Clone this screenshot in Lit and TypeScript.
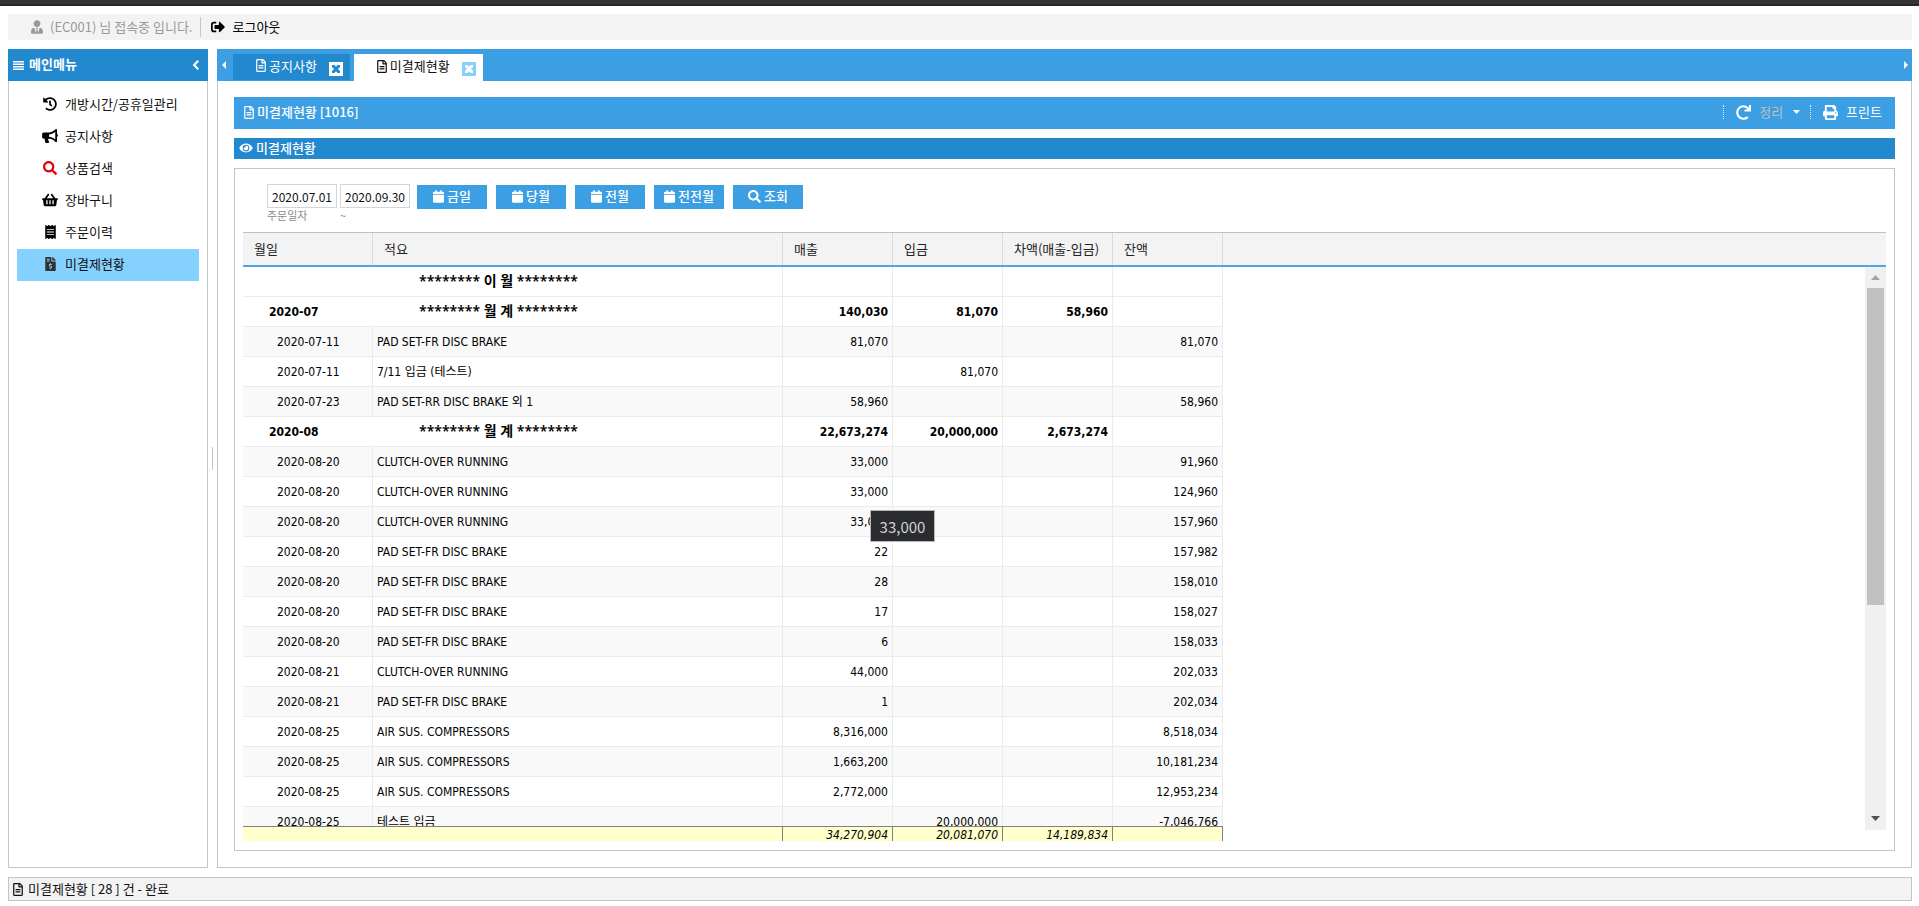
import { LitElement, html, css, svg, nothing } from 'lit';
import { customElement, property, state } from 'lit/decorators.js';
import { classMap } from 'lit/directives/class-map.js';

type Glyph = { w: number; h?: number; d: string };

const GLYPHS: Record<string, Glyph> = {
  file: { w: 384, d: 'M288 248v28c0 6.6-5.4 12-12 12H108c-6.6 0-12-5.4-12-12v-28c0-6.6 5.4-12 12-12h168c6.6 0 12 5.4 12 12zm-12 72H108c-6.6 0-12 5.4-12 12v28c0 6.6 5.4 12 12 12h168c6.6 0 12-5.4 12-12v-28c0-6.6-5.4-12-12-12zm108-188.1V464c0 26.5-21.5 48-48 48H48c-26.5 0-48-21.5-48-48V48C0 21.5 21.5 0 48 0h204.1C264.8 0 277 5.1 286 14.1L369.9 98c9 8.9 14.1 21.2 14.1 33.9zm-128-80V128h76.1L256 51.9zM336 464V176H232c-13.3 0-24-10.7-24-24V48H48v416h288z' },
  history: { w: 512, d: 'M504 255.531c.253 136.64-111.18 248.372-247.82 248.468-59.015.042-113.223-20.53-155.822-54.911-11.077-8.94-11.905-25.541-1.839-35.607l11.267-11.267c8.609-8.609 22.353-9.551 31.891-1.984C173.062 425.135 212.781 440 256 440c101.705 0 184-82.311 184-184 0-101.705-82.311-184-184-184-48.814 0-93.149 18.969-126.068 49.932l50.754 50.754c10.08 10.08 2.941 27.314-11.313 27.314H24c-8.837 0-16-7.163-16-16V38.627c0-14.254 17.234-21.393 27.314-11.314l49.372 49.372C129.209 34.136 189.552 8 256 8c136.81 0 247.747 110.78 248 247.531zm-180.912 78.784l9.823-12.63c8.138-10.463 6.253-25.542-4.21-33.679L288 256.349V152c0-13.255-10.745-24-24-24h-16c-13.255 0-24 10.745-24 24v135.651l65.409 50.874c10.463 8.137 25.541 6.253 33.679-4.21z' },
  bullhorn: { w: 576, d: 'M576 240c0-23.63-12.95-44.04-32-55.12V32.01C544 23.26 537.02 0 512 0c-7.12 0-14.19 2.38-19.98 7.02l-85.03 68.03C364.28 109.19 310.66 128 256 128H64c-35.35 0-64 28.65-64 64v96c0 35.35 28.65 64 64 64h33.7c-1.39 10.48-2.18 21.14-2.18 32 0 39.77 9.26 77.35 25.56 110.94 5.19 10.69 16.52 17.06 28.4 17.06h74.28c26.05 0 41.69-29.84 25.9-50.56-16.4-21.52-26.15-48.36-26.15-77.44 0-11.11 1.62-21.79 4.41-32H256c54.66 0 108.28 18.81 150.98 52.95l85.03 68.03a32.023 32.023 0 0 0 19.98 7.02c24.92 0 32-22.78 32-32V295.13C563.05 284.04 576 263.63 576 240zm-96 141.42l-33.05-26.44C392.95 311.78 325.12 288 256 288v-96c69.12 0 136.95-23.78 190.95-66.98L480 98.58v282.84z' },
  search: { w: 512, d: 'M505 442.7L405.3 343c-4.5-4.5-10.6-7-17-7H372c27.6-35.3 44-79.7 44-128C416 93.1 322.9 0 208 0S0 93.1 0 208s93.1 208 208 208c48.3 0 92.7-16.4 128-44v16.3c0 6.4 2.5 12.5 7 17l99.7 99.7c9.4 9.4 24.6 9.4 33.9 0l28.3-28.3c9.4-9.4 9.4-24.6.1-34zM208 336c-70.7 0-128-57.2-128-128 0-70.7 57.2-128 128-128 70.7 0 128 57.2 128 128 0 70.7-57.2 128-128 128z' },
  basket: { w: 576, d: 'M576 216v16c0 13.255-10.745 24-24 24h-8l-26.113 182.788C514.509 462.435 494.257 480 470.37 480H105.63c-23.887 0-44.139-17.565-47.518-41.212L32 256h-8c-13.255 0-24-10.745-24-24v-16c0-13.255 10.745-24 24-24h67.341l106.78-146.821c10.395-14.292 30.407-17.453 44.701-7.058 14.293 10.395 17.453 30.408 7.058 44.701L170.477 192h235.046L326.12 82.821c-10.395-14.292-7.234-34.306 7.059-44.701 14.291-10.395 34.306-7.235 44.701 7.058L484.659 192H552c13.255 0 24 10.745 24 24zM312 392V280c0-13.255-10.745-24-24-24s-24 10.745-24 24v112c0 13.255 10.745 24 24 24s24-10.745 24-24zm112 0V280c0-13.255-10.745-24-24-24s-24 10.745-24 24v112c0 13.255 10.745 24 24 24s24-10.745 24-24zm-224 0V280c0-13.255-10.745-24-24-24s-24 10.745-24 24v112c0 13.255 10.745 24 24 24s24-10.745 24-24z' },
  receipt: { w: 384, d: 'M358.4 3.2L320 48 265.6 3.2a15.9 15.9 0 0 0-19.2 0L192 48 137.6 3.2a15.9 15.9 0 0 0-19.2 0L64 48 25.6 3.2C15-4.7 0 2.8 0 16v480c0 13.2 15 20.7 25.6 12.8L64 464l54.4 44.8a15.9 15.9 0 0 0 19.2 0L192 464l54.4 44.8a15.9 15.9 0 0 0 19.2 0L320 464l38.4 44.8c10.5 7.9 25.6.4 25.6-12.8V16c0-13.2-15-20.7-25.6-12.8zM320 360c0 4.4-3.6 8-8 8H72c-4.4 0-8-3.6-8-8v-16c0-4.4 3.6-8 8-8h240c4.4 0 8 3.6 8 8v16zm0-96c0 4.4-3.6 8-8 8H72c-4.4 0-8-3.6-8-8v-16c0-4.4 3.6-8 8-8h240c4.4 0 8 3.6 8 8v16zm0-96c0 4.4-3.6 8-8 8H72c-4.4 0-8-3.6-8-8v-16c0-4.4 3.6-8 8-8h240c4.4 0 8 3.6 8 8v16z' },
  invoice: { w: 384, d: 'M377 105L279.1 7c-4.5-4.5-10.6-7-17-7H256v128h128v-6.1c0-6.3-2.5-12.4-7-16.9zm-153 31V0H24C10.7 0 0 10.7 0 24v464c0 13.3 10.7 24 24 24h336c13.3 0 24-10.7 24-24V160H248c-13.2 0-24-10.8-24-24zM64 72c0-4.42 3.58-8 8-8h80c4.42 0 8 3.58 8 8v16c0 4.42-3.58 8-8 8H72c-4.42 0-8-3.58-8-8V72zm0 80v-16c0-4.42 3.58-8 8-8h80c4.42 0 8 3.58 8 8v16c0 4.42-3.58 8-8 8H72c-4.42 0-8-3.58-8-8zm144 263.88V440c0 4.42-3.58 8-8 8h-16c-4.42 0-8-3.58-8-8v-24.29c-11.29-.58-22.27-4.52-31.37-11.35-3.9-2.93-4.1-8.77-.57-12.14l11.75-11.21c2.77-2.64 6.89-2.76 10.13-.73 3.87 2.42 8.26 3.72 12.82 3.72h28.11c6.5 0 11.8-5.92 11.8-13.19 0-5.95-3.61-11.19-8.77-12.73l-45-13.5c-18.59-5.58-31.58-23.42-31.58-43.39 0-24.52 19.05-44.44 42.67-45.07V232c0-4.42 3.58-8 8-8h16c4.42 0 8 3.58 8 8v24.29c11.29.58 22.27 4.51 31.37 11.35 3.9 2.93 4.1 8.77.57 12.14l-11.75 11.21c-2.77 2.64-6.89 2.76-10.13.73-3.87-2.43-8.26-3.72-12.82-3.72h-28.11c-6.5 0-11.8 5.92-11.8 13.19 0 5.95 3.61 11.19 8.77 12.73l45 13.5c18.59 5.58 31.58 23.42 31.58 43.39 0 24.53-19.05 44.44-42.67 45.07z' },
  user: { w: 448, d: 'M224 256c70.7 0 128-57.3 128-128S294.7 0 224 0 96 57.3 96 128s57.3 128 128 128zm95.8 32.6L272 480l-32-136 32-56h-96l32 56-32 136-47.8-191.4C56.9 292 0 350.3 0 422.4V464c0 26.5 21.5 48 48 48h352c26.5 0 48-21.5 48-48v-41.6c0-72.1-56.9-130.4-128.2-133.8z' },
  logout: { w: 512, d: 'M497 273L329 441c-15 15-41 4.5-41-17v-96H152c-13.3 0-24-10.7-24-24v-96c0-13.3 10.7-24 24-24h136V88c0-21.4 25.9-32 41-17l168 168c9.3 9.4 9.3 24.6 0 34zM192 436v-40c0-6.6-5.4-12-12-12H96c-17.7 0-32-14.3-32-32V160c0-17.7 14.3-32 32-32h84c6.6 0 12-5.4 12-12V76c0-6.6-5.4-12-12-12H96c-53 0-96 43-96 96v192c0 53 43 96 96 96h84c6.6 0 12-5.4 12-12z' },
  eye: { w: 576, d: 'M572.52 241.4C518.29 135.59 410.93 64 288 64S57.68 135.64 3.48 241.41a32.35 32.35 0 0 0 0 29.19C57.71 376.41 165.07 448 288 448s230.32-71.64 284.52-177.41a32.35 32.35 0 0 0 0-29.19zM288 400a144 144 0 1 1 144-144 143.93 143.93 0 0 1-144 144zm0-240a95.31 95.31 0 0 0-25.31 3.79 47.85 47.85 0 0 1-66.9 66.9A95.78 95.78 0 1 0 288 160z' },
  calendar: { w: 448, d: 'M12 192h424c6.6 0 12 5.4 12 12v260c0 26.5-21.5 48-48 48H48c-26.5 0-48-21.5-48-48V204c0-6.6 5.4-12 12-12zm436-44v-36c0-26.5-21.5-48-48-48h-48V12c0-6.6-5.4-12-12-12h-40c-6.6 0-12 5.4-12 12v52H160V12c0-6.6-5.4-12-12-12h-40c-6.6 0-12 5.4-12 12v52H48C21.5 64 0 85.5 0 112v36c0 6.6 5.4 12 12 12h424c6.6 0 12-5.4 12-12z' },
  redo: { w: 512, d: 'M500.33 0h-47.41a12 12 0 0 0-12 12.57l4 82.76A247.42 247.42 0 0 0 256 8C119.34 8 7.9 119.53 8 256.19 8.1 393.07 119.1 504 256 504a247.1 247.1 0 0 0 166.18-63.91 12 12 0 0 0 .48-17.43l-34-34a12 12 0 0 0-16.38-.55A176 176 0 1 1 402.1 157.8l-101.53-4.87a12 12 0 0 0-12.57 12v47.41a12 12 0 0 0 12 12h200.33a12 12 0 0 0 12-12V12a12 12 0 0 0-12-12z' },
  print: { w: 512, d: 'M448 192V77.25c0-8.49-3.37-16.62-9.37-22.63L393.37 9.37c-6-6-14.14-9.37-22.63-9.37H96C78.33 0 64 14.33 64 32v160c-35.35 0-64 28.65-64 64v112c0 8.84 7.16 16 16 16h48v96c0 17.67 14.33 32 32 32h320c17.67 0 32-14.33 32-32v-96h48c8.84 0 16-7.16 16-16V256c0-35.35-28.65-64-64-64zm-64 256H128v-96h256v96zm0-224H128V64h192v48c0 8.84 7.16 16 16 16h48v96zm48 72c-13.25 0-24-10.75-24-24 0-13.26 10.75-24 24-24s24 10.74 24 24c0 13.25-10.75 24-24 24z' },
  bars: { w: 11, h: 9, d: 'M0 0h11v1.500H0zM0 2.500h11v1.500H0zM0 5h11v1.500H0zM0 7.500h11v1.500H0z' },
  chevron: { w: 6, h: 10, d: 'M4.5 0L6 1.500 2.500 5 6 8.500 4.500 10 0 5.500v-1z' },
  left: { w: 4, h: 8, d: 'M4 0v8L0 4z' },
  right: { w: 4, h: 8, d: 'M0 0v8l4-4z' },
  up: { w: 9, h: 5, d: 'M0 5h9L4.500 0z' },
  down: { w: 9, h: 5, d: 'M0 0h9L4.500 5z' },
  cross: { w: 8, h: 8, d: 'M0 0h2.500L4 1.800 5.500 0H8v2L6 4l2 2v2H5.500L4 6.200 2.500 8H0V6l2-2-2-2z' },
};

/** Inline glyph; `size` is the drawn height in pixels. */
const icon = (name: string, size: number) => {
  const g = GLYPHS[name];
  const h = g.h ?? 512;
  return html`<svg class="icon" aria-hidden="true" viewBox="0 0 ${g.w} ${h}" width=${Math.round((g.w / h) * size)} height=${size}>${svg`<path d=${g.d}></path>`}</svg>`;
};

const base = css`
  *, *::before, *::after { box-sizing: border-box; }
  .icon { display: block; flex: none; fill: currentColor; }
  button {
    margin: 0; padding: 0; border: 0; background: none; color: inherit;
    font: inherit; cursor: pointer; display: flex; align-items: center;
  }
  a { color: inherit; text-decoration: none; }
`;

type Row = { group?: boolean; cells: string[] };

const ROWS: Row[] = [
  { group: true, cells: ['', '******** 이 월 ********', '', '', '', ''] },
  { group: true, cells: ['2020-07', '******** 월 계 ********', '140,030', '81,070', '58,960', ''] },
  { cells: ['2020-07-11', 'PAD SET-FR DISC BRAKE', '81,070', '', '', '81,070'] },
  { cells: ['2020-07-11', '7/11 입금 (테스트)', '', '81,070', '', ''] },
  { cells: ['2020-07-23', 'PAD SET-RR DISC BRAKE 외 1', '58,960', '', '', '58,960'] },
  { group: true, cells: ['2020-08', '******** 월 계 ********', '22,673,274', '20,000,000', '2,673,274', ''] },
  { cells: ['2020-08-20', 'CLUTCH-OVER RUNNING', '33,000', '', '', '91,960'] },
  { cells: ['2020-08-20', 'CLUTCH-OVER RUNNING', '33,000', '', '', '124,960'] },
  { cells: ['2020-08-20', 'CLUTCH-OVER RUNNING', '33,000', '', '', '157,960'] },
  { cells: ['2020-08-20', 'PAD SET-FR DISC BRAKE', '22', '', '', '157,982'] },
  { cells: ['2020-08-20', 'PAD SET-FR DISC BRAKE', '28', '', '', '158,010'] },
  { cells: ['2020-08-20', 'PAD SET-FR DISC BRAKE', '17', '', '', '158,027'] },
  { cells: ['2020-08-20', 'PAD SET-FR DISC BRAKE', '6', '', '', '158,033'] },
  { cells: ['2020-08-21', 'CLUTCH-OVER RUNNING', '44,000', '', '', '202,033'] },
  { cells: ['2020-08-21', 'PAD SET-FR DISC BRAKE', '1', '', '', '202,034'] },
  { cells: ['2020-08-25', 'AIR SUS. COMPRESSORS', '8,316,000', '', '', '8,518,034'] },
  { cells: ['2020-08-25', 'AIR SUS. COMPRESSORS', '1,663,200', '', '', '10,181,234'] },
  { cells: ['2020-08-25', 'AIR SUS. COMPRESSORS', '2,772,000', '', '', '12,953,234'] },
  { cells: ['2020-08-25', '테스트 입금', '', '20,000,000', '', '-7,046,766'] },
];

@customElement('ledger-grid')
export class LedgerGrid extends LitElement {
  @property({ attribute: false }) rows: Row[] = [];
  @property({ attribute: false }) totals: string[] = [];

  static styles = [base, css`
    :host {
      flex: 1; min-height: 0; display: grid;
      grid-template: 35px minmax(0, 1fr) 11px / minmax(0, 1fr) 21px;
      color: #000;
    }
    .table {
      grid-area: 1 / 1 / -1 / -1; min-height: 0;
      display: flex; flex-direction: column;
      font: 12px/18px "DejaVu Sans Condensed", "Noto Sans CJK KR", sans-serif;
    }
    thead, tbody, tfoot { display: block; }
    tr { display: grid; grid-template-columns: 130px 410px repeat(4, 110px); }
    th, td { padding: 0; text-align: left; font-weight: inherit; white-space: nowrap; overflow: hidden; }
    thead { flex: none; background: #f3f3f3; border-top: 1px solid #c0c0c0; border-bottom: 2px solid #4ea6e4; }
    thead tr { height: 32px; }
    thead th {
      padding: 6px 0 6px 11px; border-right: 1px solid #dadada; color: #222;
      font: 13px/20px "Noto Sans CJK KR", sans-serif;
    }
    tbody { flex: 1; min-height: 0; overflow: hidden; }
    tbody tr { height: 30px; width: max-content; }
    tbody tr:nth-child(odd):not(.group) { background: #f9f9f9; }
    tbody td { padding: 6px 4px 5px; border-right: 1px solid #ebebeb; border-bottom: 1px solid #ebebeb; }
    tbody td:first-child { padding-left: 34px; }
    .num { text-align: right; }
    .group { font-weight: 700; }
    tbody .group td:first-child { padding-left: 26px; border-right-color: transparent; }
    tbody .group td:nth-child(2) { padding: 5px 4px 6px 46px; font-family: "Noto Sans", "Noto Sans CJK KR", sans-serif; font-size: 14px; font-weight: 600; }
    tfoot { flex: none; font-style: italic; }
    tfoot tr { height: 15px; width: max-content; background: #ffffcc; border-top: 1px solid #808080; }
    tfoot td { padding: 0 4px; line-height: 16px; border-right: 1px solid #808080; }
    tfoot td:first-child { border-right-color: transparent; }
    .scroll {
      grid-area: 2 / 2; background: #f0f0f0; display: flex; flex-direction: column;
      align-items: center; padding: 8px 2px 9px; z-index: 1;
    }
    .thumb { flex: 0 0 58%; width: 17px; margin-top: 8px; background: #c1c1c1; }
    .arrow-up { color: #a3a3a3; }
    .arrow-down { color: #505050; margin-top: auto; }
  `];

  render() {
    const heads = ['월일', '적요', '매출', '입금', '차액(매출-입금)', '잔액'];
    return html`
      <table class="table">
        <thead><tr>${heads.map(h => html`<th scope="col">${h}</th>`)}</tr></thead>
        <tbody>
          ${this.rows.map(r => html`<tr class=${classMap({ group: !!r.group })}>
            ${r.cells.map((c, i) => html`<td class=${i > 1 ? 'num' : nothing}>${c}</td>`)}
          </tr>`)}
        </tbody>
        <tfoot><tr>${this.totals.map(t => html`<td class="num">${t}</td>`)}</tr></tfoot>
      </table>
      <div class="scroll" aria-hidden="true">
        <span class="arrow-up">${icon('up', 5)}</span>
        <div class="thumb"></div>
        <span class="arrow-down">${icon('down', 5)}</span>
      </div>`;
  }
}

@customElement('side-menu')
export class SideMenu extends LitElement {
  @state() private current = '미결제현황';

  static styles = [base, css`
    :host { flex: none; width: 200px; display: flex; flex-direction: column; }
    .head {
      height: 32px; padding: 0 9px 0 5px; display: flex; align-items: center; gap: 5px;
      background: #2389cf; color: #fff;
    }
    .title { flex: 1; margin: 0; padding-bottom: 2px; font-size: 13px; line-height: 30px; }
    .list {
      flex: 1; margin: 0; padding: 8px; list-style: none;
      border: 1px solid #c5c5c5; border-top: 0;
    }
    .item { display: flex; align-items: center; gap: 7px; height: 32px; padding: 0 0 2px 25px; color: #111; }
    .slot { width: 16px; display: flex; justify-content: center; color: #000; }
    .red { color: #e60012; }
    .current { background: #84d0ff; }
    .current .slot { color: #333; }
  `];

  private items = [
    ['history', '개방시간/공휴일관리'], ['bullhorn', '공지사항'], ['search', '상품검색'],
    ['basket', '장바구니'], ['receipt', '주문이력'], ['invoice', '미결제현황'],
  ];

  render() {
    return html`
      <div class="head">${icon('bars', 9)}<h2 class="title">메인메뉴</h2>
        <button aria-label="메뉴 접기">${icon('chevron', 10)}</button></div>
      <ul class="list">
        ${this.items.map(([g, t]) => html`<li>
          <a href="#" class=${classMap({ item: true, current: t === this.current })}
            @click=${(e: Event) => { e.preventDefault(); this.current = t; }}>
            <span class=${classMap({ slot: true, red: g === 'search' })}>${icon(g, 14)}</span>${t}</a></li>`)}
      </ul>`;
  }
}

@customElement('app-root')
export class AppRoot extends LitElement {
  static styles = [base, css`
    :host {
      display: flex; flex-direction: column; height: 100vh; overflow: hidden; position: relative;
      background: #fff; color: #111;
      font: 13px/20px "Noto Sans CJK KR", sans-serif;
    }
    .edge { flex: none; height: 6px; background: #333438; border-bottom: 2px solid #26262a; }
    .user {
      flex: none; height: 26px; margin: 8px 7px 9px 8px; padding-left: 23px;
      display: flex; align-items: center; background: #f3f3f3;
    }
    .who { display: flex; align-items: center; gap: 7px; padding-right: 8px; color: #999; }
    .logout { gap: 7px; padding-left: 10px; border-left: 1px solid #c5c5c5; height: 20px; color: #000; }
    .main { flex: 1; min-height: 0; margin: 0 7px 9px 8px; display: flex; }
    .splitter { flex: none; width: 9px; display: flex; align-items: center; justify-content: center; }
    .grip { width: 1px; height: 23px; background: #c5c5c5; }
    .work { flex: 1; min-width: 0; display: flex; flex-direction: column; }
    .tabs { flex: none; height: 32px; display: flex; align-items: flex-end; background: #3c9fe3; color: #fff; }
    .nudge { width: 16px; height: 32px; justify-content: center; padding-right: 3px; }
    .nudge.last { margin-left: auto; width: 12px; padding: 0; }
    .tab { display: flex; align-items: center; padding: 0 7px 0 23px; height: 27px; }
    .pick { gap: 3px; height: 27px; padding-bottom: 3px; margin-right: 12px; }
    .tab.idle { background: #2389cf; margin-right: 4px; border-bottom: 1px solid #3c9fe3; }
    .tab.open { background: #fff; color: #111; }
    .close { width: 14px; height: 14px; margin-top: 3px; justify-content: center; background: #fff; color: #2389cf; }
    .open .close { background: #84d0ff; color: #fff; }
    .page {
      flex: 1; min-height: 0; padding: 16px; display: flex; flex-direction: column;
      border: 1px solid #c5c5c5; border-top: 0;
    }
    .bar { flex: none; display: flex; align-items: center; color: #fff; font-weight: 500; }
    .bar.title { height: 32px; padding: 0 13px 2px 10px; gap: 3px; background: #3c9fe3; }
    .bar.section { height: 21px; margin: 9px 0; padding: 0 5px 1px; gap: 3px; background: #2389cf; }
    h1, h3 { margin: 0; font: inherit; }
    .tools { margin-left: auto; display: flex; align-items: center; font-weight: 400; }
    .tool { gap: 8px; padding-left: 12px; height: 14px; border-left: 1px dotted #e4f2fc; }
    .tool.muted { padding-right: 10px; }
    .muted .caption { color: #c0c0c0; margin-right: 2px; }
    .panel {
      flex: 1; min-height: 0; padding: 15px 8px 9px; display: flex; flex-direction: column;
      border: 1px solid #c5c5c5;
    }
    .filters { flex: none; display: flex; align-items: flex-start; padding-left: 24px; height: 48px; }
    .field { display: flex; flex-direction: column; width: 70px; margin-right: 3px; }
    .field input {
      order: -1; width: 70px; height: 24px; padding: 0 0 0 4px; border: 1px solid #d5d5d5; border-radius: 0;
      font: 12px "Noto Sans CJK KR", sans-serif; color: #111; background: #fff;
    }
    .field label { font-size: 11px; line-height: 14px; color: #8a8a8a; }
    .buttons { display: flex; gap: 9px; padding: 1px 0 0 4px; }
    .action { width: 70px; height: 24px; gap: 3px; justify-content: center; background: #3c9fe3; color: #fff; font-weight: 500; padding-bottom: 2px; }
    .status {
      flex: none; height: 24px; margin: 0 7px 5px 8px; padding: 0 4px; display: flex; align-items: center; gap: 5px;
      background: #f3f3f3; border: 1px solid #c5c5c5;
    }
    .tip {
      position: absolute; left: 870px; top: 510px; width: 65px; height: 32px; z-index: 2;
      border: 1px solid #b8b8ba; background: #2b2c30; color: #d2d2d2; text-align: center;
      font-size: 15px; line-height: 32px;
    }
  `];

  private presets = [['calendar', '금일'], ['calendar', '당월'], ['calendar', '전월'], ['calendar', '전전월'], ['search', '조회']];

  render() {
    return html`
      <div class="edge"></div>
      <header class="user">
        <span class="who">${icon('user', 14)}(EC001) 님 접속중 입니다.</span>
        <button class="logout">${icon('logout', 14)}로그아웃</button>
      </header>
      <div class="main">
        <side-menu></side-menu>
        <div class="splitter"><div class="grip"></div></div>
        <main class="work">
          <nav class="tabs">
            <button class="nudge" aria-label="이전 탭">${icon('left', 8)}</button>
            <div class="tab idle"><button class="pick">${icon('file', 13)}공지사항</button>
              <button class="close" aria-label="닫기">${icon('cross', 8)}</button></div>
            <div class="tab open"><button class="pick">${icon('file', 13)}미결제현황</button>
              <button class="close" aria-label="닫기">${icon('cross', 8)}</button></div>
            <button class="nudge last" aria-label="다음 탭">${icon('right', 8)}</button>
          </nav>
          <section class="page">
            <div class="bar title">${icon('file', 13)}<h1>미결제현황 [1016]</h1>
              <div class="tools">
                <button class="tool muted">${icon('redo', 15)}<span class="caption">정리</span>${icon('down', 4)}</button>
                <button class="tool">${icon('print', 15)}프린트</button>
              </div>
            </div>
            <div class="bar section">${icon('eye', 12)}<h3>미결제현황</h3></div>
            <div class="panel">
              <div class="filters">
                <div class="field"><label for="from">주문일자</label><input id="from" type="text" .value=${'2020.07.01'}></div>
                <div class="field"><label for="to">~</label><input id="to" type="text" .value=${'2020.09.30'}></div>
                <div class="buttons">
                  ${this.presets.map(([g, t]) => html`<button class="action">${icon(g, 13)}${t}</button>`)}
                </div>
              </div>
              <ledger-grid .rows=${ROWS} .totals=${['', '', '34,270,904', '20,081,070', '14,189,834', '']}></ledger-grid>
            </div>
          </section>
        </main>
      </div>
      <footer class="status">${icon('file', 13)}미결제현황 [ 28 ] 건 - 완료</footer>
      <div class="tip" role="tooltip">33,000</div>`;
  }
}
